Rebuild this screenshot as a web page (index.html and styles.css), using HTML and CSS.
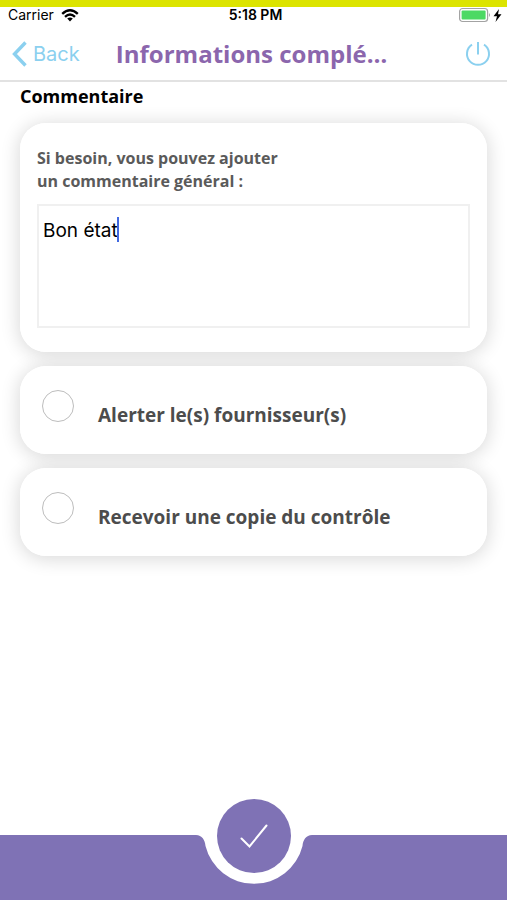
FILE: index.html
```html
<!DOCTYPE html>
<html lang="fr">
<head>
<meta charset="utf-8">
<meta name="viewport" content="width=device-width, initial-scale=1">
<title>Informations complémentaires</title>
<link rel="stylesheet" href="styles.css">
</head>
<body>
<div class="status">
  <div class="carrier">
    <span>Carrier</span>
    <svg width="18" height="13" viewBox="0 0 18 13" fill="none" stroke="#000" stroke-width="2.4" aria-hidden="true">
      <path d="M1.2 4.8Q9-2.2 16.8 4.8"/><path d="M4 7.8Q9 3.4 14 7.8"/><path d="M9 12.4L6.2 9.6Q9 7.4 11.8 9.6Z" fill="#000" stroke="none"/>
    </svg>
  </div>
  <span class="time">5:18 PM</span>
  <svg class="battery" width="44" height="16" viewBox="0 0 44 16" aria-hidden="true">
    <rect x="0.600" y="1.5" width="28" height="13" rx="3" fill="#fff" stroke="#a3a3a3" stroke-width="1.2"/>
    <rect x="2.600" y="3.5" width="24" height="9" rx="1" fill="#4cd964"/>
    <path d="M30 6Q32 8 30 10Z" fill="#a3a3a3"/>
    <path d="M40 2L34.500 9.200H38L36.500 15L42.500 7.200H39Z" fill="#000"/>
  </svg>
</div>
<header class="nav">
  <a class="back" href="#">
    <svg width="15" height="26" viewBox="0 0 15 26" fill="none" stroke="currentColor" stroke-width="3.4" aria-hidden="true"><path d="M13.500 1.500L2.500 13L13.500 24.500"/></svg>
    <span>Back</span>
  </a>
  <h1>Informations complé…</h1>
  <button class="power" type="button" aria-label="Déconnexion">
    <svg width="26" height="26" viewBox="0 0 26 26" fill="none" stroke="currentColor" stroke-width="2" aria-hidden="true"><path d="M7 3.600A11 11 0 1 0 19 3.600M13 1V13.500"/></svg>
  </button>
</header>
<main>
  <h2>Commentaire</h2>
  <div class="cards">
    <section class="card comment">
      <label for="comment">Si besoin, vous pouvez ajouter<br>un commentaire général :</label>
      <div class="field">
        <textarea id="comment">Bon état</textarea>
        <span class="caret"></span>
      </div>
    </section>
    <label class="card option"><input type="checkbox"><span>Alerter le(s) fournisseur(s)</span></label>
    <label class="card option"><input type="checkbox"><span>Recevoir une copie du contrôle</span></label>
  </div>
</main>
<footer class="footer">
  <div class="bar"></div>
  <svg class="notch" width="120" height="65" viewBox="0 0 120 65" fill="#7f72b5" aria-hidden="true"><path d="M0 0H2C8 0 11 5 11.500 11A50 50 0 0 0 108.500 11C109 5 112 0 118 0H120V65H0Z"/></svg>
  <div class="bar"></div>
  <button class="confirm" type="button" aria-label="Valider">
    <svg width="28" height="24" viewBox="0 0 28 24" fill="none" stroke="#fff" stroke-width="2" stroke-linecap="round" aria-hidden="true"><path d="M1.500 14.500L9.500 22.500L26.500 1.500"/></svg>
  </button>
</footer>
</body>
</html>
```
FILE: styles.css
```css
* { box-sizing: border-box; }
body {
  margin: 0;
  min-height: 100vh;
  display: flex;
  flex-direction: column;
  background: #fff;
  color: #000;
  font-family: "Open Sans", sans-serif;
}
button { padding: 0; border: 0; background: none; cursor: pointer; }
svg { display: block; }
h1, h2 { margin: 0; }

.status {
  height: 22px;
  padding: 0 4px 4px 8px;
  border-top: 7px solid #dce400;
  display: grid;
  grid-template-columns: 1fr auto 1fr;
  align-items: center;
  font: 14px/14px Inter, sans-serif;
}
.carrier { display: flex; align-items: center; gap: 7px; }
.time { font-weight: 600; }
.battery { justify-self: end; }

.nav {
  height: 60px;
  padding: 6px 16px 0 12px;
  border-bottom: 2px solid #e2e2e2;
  display: grid;
  grid-template-columns: 1fr auto 1fr;
  align-items: center;
}
.back {
  display: flex;
  align-items: center;
  gap: 6px;
  color: #8bd0ef;
  font: 20px/24px Inter, sans-serif;
  text-decoration: none;
}
.nav h1 {
  color: #8b66ad;
  font-size: 24px;
  line-height: 32px;
  font-weight: 700;
}
.power { justify-self: end; color: #8bd0ef; }

main { flex: 1; padding: 2px 20px 20px; }
h2 { font-size: 18px; line-height: 24px; font-weight: 700; }
.cards { display: flex; flex-direction: column; gap: 14px; margin-top: 15px; isolation: isolate; }
.card { position: relative; border-radius: 26px; background: #fff; color: #5a5a5a; font-weight: 700; }
.card::before {
  content: "";
  position: absolute;
  inset: 0;
  z-index: -1;
  border-radius: 26px;
  box-shadow: 0 2px 18px 2px rgba(0, 0, 0, 0.14);
}
.comment { padding: 24px 17px; font-size: 16px; line-height: 23px; }
.comment label { display: block; }
.field { position: relative; margin-top: 11px; }
textarea {
  display: block;
  width: 100%;
  height: 124px;
  padding: 13px 4px;
  border: 2px solid #f0f0f0;
  border-radius: 0;
  outline: 0;
  resize: none;
  background: #fff;
  color: #000;
  font: 19px/24px Inter, sans-serif;
}
.caret { position: absolute; left: 80px; top: 13px; width: 2px; height: 25px; background: #4169e1; }
.option { display: flex; align-items: flex-start; gap: 24px; height: 88px; padding: 24px 22px; cursor: pointer; }
.option input {
  appearance: none;
  flex: none;
  width: 32px;
  height: 32px;
  margin: 0;
  border: 1px solid #bdbdbd;
  border-radius: 50%;
}
.option input:checked { background: #7f72b5; }
.option span { padding-top: 12px; font-size: 19px; line-height: 26px; color: #4c4c4c; }

.footer { position: relative; display: flex; height: 65px; }
.bar { flex: 1; background: #7f72b5; }
.confirm {
  position: absolute;
  left: 50%;
  top: -36px;
  width: 74px;
  height: 74px;
  margin-left: -37px;
  border-radius: 50%;
  background: #7f72b5;
  display: grid;
  place-items: center;
}
```
